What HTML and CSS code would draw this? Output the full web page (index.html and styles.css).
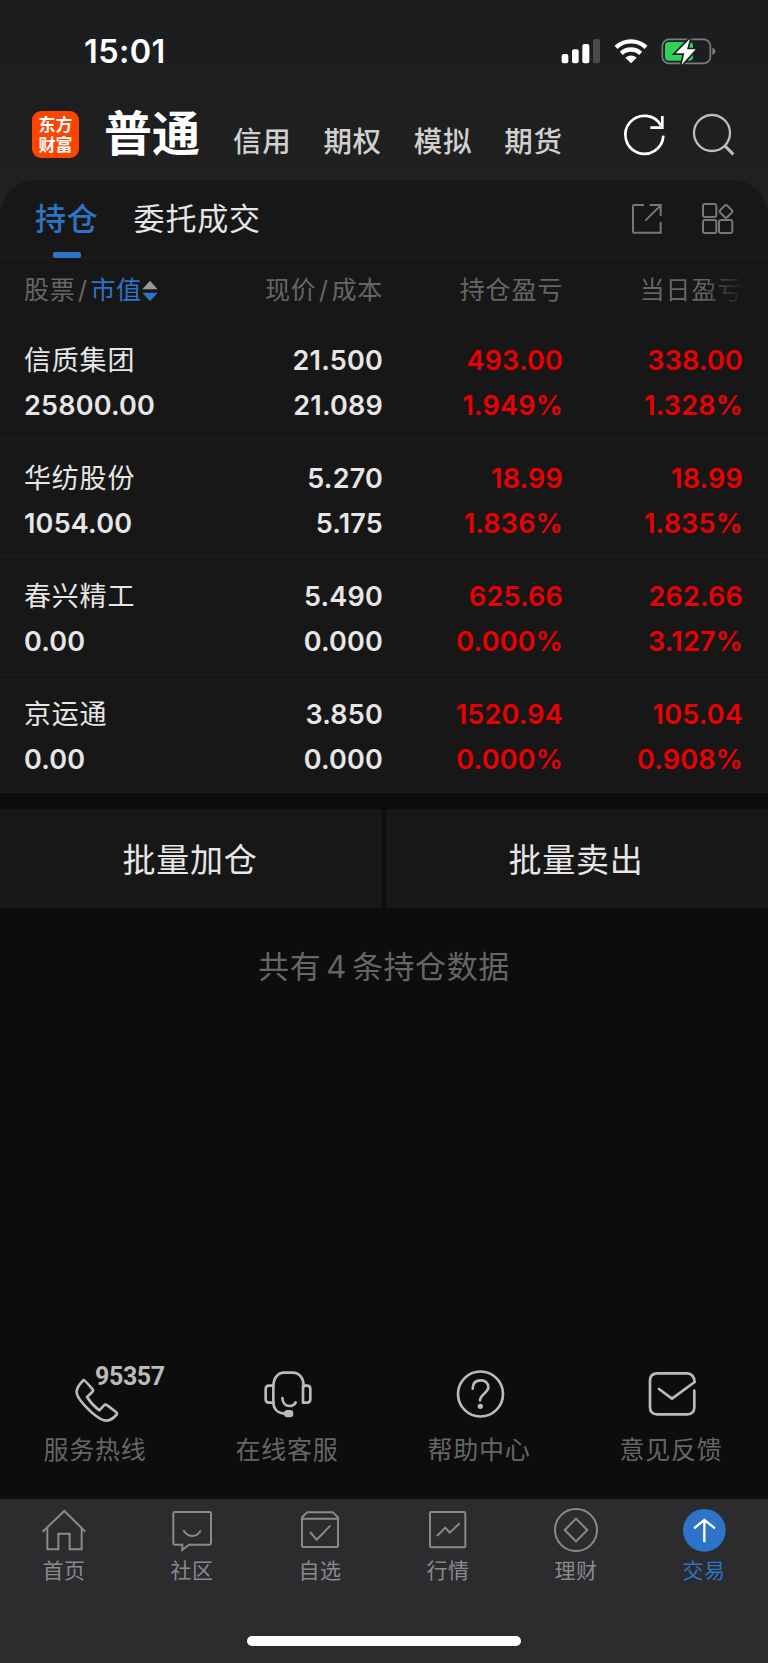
FILE: index.html
```
<!DOCTYPE html>
<html lang="zh-CN">

<head>
    <meta charset="UTF-8" />
    <meta name="viewport" content="width=device-width, initial-scale=1.0" />
    <title>持仓</title>
    <link rel="stylesheet" href="styles.css">
</head>

<body>
    <div class="app">
        <div class="status-bar">
            <span class="time">15:01</span>
            <div class="status-icons">
                <svg width="40" height="26" viewBox="0 0 120 78" fill="#fff">
                    <rect x="2" y="48" width="20" height="28" rx="6" />
                    <rect x="33" y="34" width="20" height="42" rx="6" />
                    <rect x="64" y="18" width="21" height="58" rx="6" />
                    <rect x="96" y="3" width="21" height="73" rx="6" fill="#4b4b4d" />
                </svg>
                <svg class="wifi" width="34" height="26" viewBox="0 0 102 78" fill="none" stroke="#fff" stroke-width="13">
                    <path d="M6 28A65 65 0 0 1 96 28" />
                    <path d="M22 46A42 42 0 0 1 80 46" />
                    <path d="M51 76L34 59Q51 46 68 59Z" fill="#fff" stroke="none" />
                </svg>
                <svg width="55" height="28" viewBox="0 0 165 84">
                    <rect x="4" y="7" width="144" height="72" rx="20" fill="none" stroke="#7b7b7d" stroke-width="5" />
                    <path d="M154 32Q163 35 163 43Q163 51 154 54Z" fill="#7b7b7d" />
                    <rect x="12" y="15" width="84" height="56" rx="11" fill="#30d158" />
                    <path class="bolt" d="M87 5L44 49H70L62 83L104 37H78Z" />
                </svg>
            </div>
        </div>

        <div class="header">
            <div class="logo"><span>东方</span><span>财富</span></div>
            <h1>普通</h1>
            <div class="nav">
                <span>信用</span>
                <span>期权</span>
                <span>模拟</span>
                <span>期货</span>
            </div>
            <svg class="refresh" width="42" height="42" viewBox="0 0 126 126" fill="none" stroke="#fff" stroke-width="8">
                <path d="M118 68A57 57 0 1 1 111 38" />
                <path d="M115 9V44H79" />
            </svg>
            <svg class="search" width="42" height="42" viewBox="0 0 126 126" fill="none" stroke="#bdbdbd" stroke-width="7">
                <circle cx="60" cy="60" r="54" />
                <path d="M98 98L124 124" stroke-width="9" />
            </svg>
        </div>

        <div class="panel">
            <div class="tabs">
                <span class="tab active">持仓</span>
                <span class="tab">委托成交</span>
                <div class="tab-icons">
                    <svg width="30" height="30" viewBox="0 0 90 90" fill="none" stroke="#777" stroke-width="6">
                        <path d="M36 3H6Q3 3 3 6V83Q3 86 6 86H86V54" />
                        <path d="M53 3H86V36M86 4L40 50" />
                    </svg>
                    <svg width="32" height="32" viewBox="0 0 96 96" fill="none" stroke="#777" stroke-width="6">
                        <rect x="3" y="3" width="40" height="39" rx="6" />
                        <rect x="3" y="51" width="40" height="39" rx="6" />
                        <rect x="51" y="51" width="40" height="39" rx="6" />
                        <rect x="57" y="10" width="30" height="30" rx="6" transform="rotate(45 72 25)" />
                    </svg>
                </div>
            </div>

            <div class="row head">
                <div class="sort">股票<i>/</i><b>市值</b>
                    <svg width="16" height="22" viewBox="0 0 48 66">
                        <path d="M24 2L47 28H1Z" fill="#999" />
                        <path d="M1 38H47L24 64Z" fill="#2d74c8" />
                    </svg>
                </div>
                <div>现价<i>/</i>成本</div>
                <div>持仓盈亏</div>
                <div class="faded">当日盈亏</div>
            </div>

            <div class="row">
                <div><span class="name">信质集团</span><span>25800.00</span></div>
                <div><span>21.500</span><span>21.089</span></div>
                <div class="up"><span>493.00</span><span>1.949%</span></div>
                <div class="up"><span>338.00</span><span>1.328%</span></div>
            </div>
            <div class="row">
                <div><span class="name">华纺股份</span><span>1054.00</span></div>
                <div><span>5.270</span><span>5.175</span></div>
                <div class="up"><span>18.99</span><span>1.836%</span></div>
                <div class="up"><span>18.99</span><span>1.835%</span></div>
            </div>
            <div class="row">
                <div><span class="name">春兴精工</span><span>0.00</span></div>
                <div><span>5.490</span><span>0.000</span></div>
                <div class="up"><span>625.66</span><span>0.000%</span></div>
                <div class="up"><span>262.66</span><span>3.127%</span></div>
            </div>
            <div class="row">
                <div><span class="name">京运通</span><span>0.00</span></div>
                <div><span>3.850</span><span>0.000</span></div>
                <div class="up"><span>1520.94</span><span>0.000%</span></div>
                <div class="up"><span>105.04</span><span>0.908%</span></div>
            </div>
        </div>

        <div class="actions">
            <button>批量加仓</button>
            <button>批量卖出</button>
        </div>

        <p class="summary">共有<span>4</span>条持仓数据</p>

        <div class="services">
            <div class="service">
                <svg width="48" height="48" viewBox="0 0 144 144">
                    <path d="M35 30Q38 30 62 58Q65 62 60 67L45 81Q60 105 82 121L96 106Q100 102 106 106L132 126Q137 130 133 135Q118 151 104 152Q88 152 60 128Q14 86 14 66Q14 50 35 30Z" />
                </svg>
                <span class="hotline">95357</span>
                <span class="label">服务热线</span>
            </div>
            <div class="service">
                <svg width="48" height="48" viewBox="0 0 144 144">
                    <path d="M62 131C40 130 28 116 28 96V50C28 24 42 8 60 8H86C106 8 119 24 119 50" />
                    <path d="M28 47H15Q5 47 5 57V88Q5 98 15 98H28" />
                    <path d="M117 47H129Q139 47 139 57V88Q139 98 129 98H117Z" />
                    <path d="M55 84C56 99 65 108 76 108C86 108 92 103 95 97" />
                    <rect x="60" y="120" width="28" height="22" rx="10" fill="#bbb" stroke="none" />
                </svg>
                <span class="label">在线客服</span>
            </div>
            <div class="service">
                <svg width="48" height="48" viewBox="0 0 144 144">
                    <circle cx="73.5" cy="72" r="67.5" />
                    <path d="M50 56C50 39 60 31 74 31C88 31 97 39 97 52C97 68 72 74 72 91" />
                    <circle cx="73" cy="109" r="8" fill="#bbb" stroke="none" />
                </svg>
                <span class="label">帮助中心</span>
            </div>
            <div class="service">
                <svg width="48" height="48" viewBox="0 0 144 144">
                    <path d="M139 62V111Q139 133 117 133H28Q6 133 6 111V32Q6 10 28 10H117Q138 11 140 36L72 86L33 57" />
                </svg>
                <span class="label">意见反馈</span>
            </div>
        </div>

        <div class="tab-bar">
            <div class="item">
                <svg width="48" height="48" viewBox="0 0 144 144">
                    <path d="M8 77L73 15L136 77" />
                    <path d="M22 65V130H55V83H89V130H125V65" />
                </svg>
                <span>首页</span>
            </div>
            <div class="item">
                <svg width="48" height="48" viewBox="0 0 144 144">
                    <path d="M20 18H125Q129 18 129 22V112Q129 116 125 116H63L43 132V116H20Q16 116 16 112V22Q16 18 20 18Z" />
                    <path d="M46 73Q56 90 72 90Q90 90 98 73" />
                </svg>
                <span>社区</span>
            </div>
            <div class="item">
                <svg width="48" height="48" viewBox="0 0 144 144">
                    <path d="M18 34L34 19H110L126 34V118Q126 123 121 123H23Q18 123 18 118ZM18 38H126" />
                    <path d="M42 78L62 101L103 59" />
                </svg>
                <span>自选</span>
            </div>
            <div class="item">
                <svg width="48" height="48" viewBox="0 0 144 144">
                    <rect x="18" y="18" width="106" height="106" rx="4" />
                    <path d="M39 90L64 65L77 80L107 52" />
                </svg>
                <span>行情</span>
            </div>
            <div class="item">
                <svg width="48" height="48" viewBox="0 0 144 144">
                    <circle cx="72" cy="72" r="63" />
                    <path d="M72 38L106 72L72 106L38 72Z" />
                </svg>
                <span>理财</span>
            </div>
            <div class="item active">
                <svg width="48" height="48" viewBox="0 0 144 144">
                    <circle cx="73" cy="73" r="64" fill="#2d74c8" stroke="none" />
                    <path d="M73 109V42M42 67L73 42L105 67" stroke="#fff" stroke-width="7" />
                </svg>
                <span>交易</span>
            </div>
        </div>
        <div class="home-indicator"></div>
    </div>
</body>

</html>
```
FILE: styles.css
```
* {
    box-sizing: border-box;
    margin: 0;
    padding: 0;
}

body {
    background-color: #0d0d0d;
    color: #e6e6e6;
    font-family: Inter, 'Noto Sans CJK SC', sans-serif;
}

svg {
    display: block;
    flex-shrink: 0;
    overflow: visible;
}

.app {
    width: 768px;
    height: 1663px;
    display: flex;
    flex-direction: column;
    background: linear-gradient(#1c1d1f 0, #1d1e1f 100px, #212121 200px, #212121 230px, #0d0d0d 230px);
}

.status-bar {
    height: 100px;
    padding: 2px 52px 0 84px;
    display: flex;
    align-items: center;
    justify-content: space-between;
    color: #fff;
}

.time {
    font-size: 32.5px;
    font-weight: 600;
    letter-spacing: 0.4px;
}

.status-icons {
    display: flex;
    align-items: center;
    gap: 13px;
}

.bolt {
    fill: #fff;
    stroke: #1d1e20;
    stroke-width: 10;
    paint-order: stroke;
}

.header {
    height: 80px;
    padding: 0 34px 0 32px;
    display: flex;
    align-items: center;
}

.logo {
    width: 47px;
    height: 47px;
    margin-top: -12px;
    border-radius: 9px;
    background-color: #ff4400;
    color: #fff;
    display: flex;
    flex-direction: column;
    align-items: center;
    justify-content: center;
    font-family: 'Noto Sans CJK SC', sans-serif;
    font-size: 17px;
    font-weight: 700;
    line-height: 20px;
}

h1 {
    margin: -12px 0 0 25px;
    color: #fff;
    font-size: 48px;
    font-weight: 700;
    line-height: 60px;
}

.nav {
    margin: -2px 0 0 33px;
    display: flex;
    gap: 32px;
    color: #d0d0d0;
    font-size: 28.5px;
    font-weight: 500;
    letter-spacing: 0.7px;
}

.refresh {
    margin: -13px 0 0 auto;
}

.search {
    margin: -13px 0 0 26px;
}

.panel {
    background-color: #171717;
    border-radius: 36px 36px 0 0;
}

.tabs {
    height: 78px;
    padding: 0 34px 0 35px;
    border-bottom: 1px solid #1f1f1f;
    display: flex;
    align-items: center;
    gap: 35px;
    font-size: 31px;
    letter-spacing: 0.8px;
}

.tab {
    height: 78px;
    line-height: 78px;
}

.tab.active {
    color: #2d74c8;
    font-weight: 500;
    display: flex;
    flex-direction: column;
    align-items: center;
}

.tab.active::after {
    content: '';
    width: 28px;
    height: 6px;
    margin-top: -6px;
    border-radius: 2px;
    background-color: #2d74c8;
}

.tab-icons {
    margin-left: auto;
    display: flex;
    align-items: center;
    gap: 40px;
}

.row {
    height: 118px;
    padding: 17px 25px 0 24px;
    border-bottom: 1px solid #1e1e1e;
    display: grid;
    grid-template-columns: 180px 179px 180px 180px;
    font-size: 27px;
    font-weight: 600;
    line-height: 45px;
    letter-spacing: 0.2px;
    text-align: right;
}

.row > :first-child {
    text-align: left;
}

.row span {
    display: block;
    height: 44.5px;
}

.row .name {
    font-weight: 400;
    letter-spacing: 0.8px;
}

.up {
    color: #eb0000;
}

.head {
    height: 63px;
    padding-top: 10px;
    border: none;
    color: #666;
    font-size: 25px;
    font-weight: 400;
    letter-spacing: 0.8px;
}

.head i {
    font-style: normal;
    padding: 0 2.5px;
}

.sort {
    height: 45px;
    display: flex;
    align-items: center;
}

.sort b {
    color: #2d74c8;
    font-weight: 400;
}

.faded {
    -webkit-mask-image: linear-gradient(to right, #000 140px, transparent 182px);
    mask-image: linear-gradient(to right, #000 140px, transparent 182px);
}

.actions {
    margin-top: 16px;
    display: flex;
    gap: 4px;
}

.actions button {
    flex: 1;
    height: 99px;
    padding: 0 2px 2px 0;
    border: none;
    background-color: #171717;
    color: #e6e6e6;
    font-family: inherit;
    font-size: 33px;
    letter-spacing: 0.8px;
}

.summary {
    margin-top: 36px;
    color: #666;
    font-size: 31px;
    line-height: 46px;
    letter-spacing: 0.6px;
    text-align: center;
}

.summary span {
    padding: 0 5px;
}

.services {
    margin-top: auto;
    height: 129px;
    display: flex;
}

.service {
    flex: 1;
    display: flex;
    flex-direction: column;
    align-items: center;
    position: relative;
    color: #666;
    font-size: 25px;
    line-height: 36px;
    letter-spacing: 0.8px;
}

.service svg {
    margin-bottom: 14px;
    fill: none;
    stroke: #bbb;
    stroke-width: 8;
    stroke-linecap: round;
    stroke-linejoin: round;
}

.label {
    margin-right: 2px;
}

.hotline {
    position: absolute;
    left: 95px;
    top: -11px;
    color: #bbb;
    font-family: Roboto, sans-serif;
    font-size: 25px;
    font-weight: 700;
    letter-spacing: -0.4px;
}

.tab-bar {
    height: 164px;
    padding-top: 7px;
    background-color: #2c2c2e;
    display: flex;
}

.item {
    flex: 1;
    display: flex;
    flex-direction: column;
    align-items: center;
    color: #8a8a8e;
    font-size: 21px;
    line-height: 30px;
    letter-spacing: 0.6px;
}

.item svg {
    margin-bottom: 2px;
    fill: none;
    stroke: #8a8a8e;
    stroke-width: 6;
}

.item.active {
    color: #2d74c8;
}

.home-indicator {
    position: absolute;
    left: 247px;
    top: 1636px;
    width: 274px;
    height: 10px;
    border-radius: 5px;
    background-color: #fff;
}
```
